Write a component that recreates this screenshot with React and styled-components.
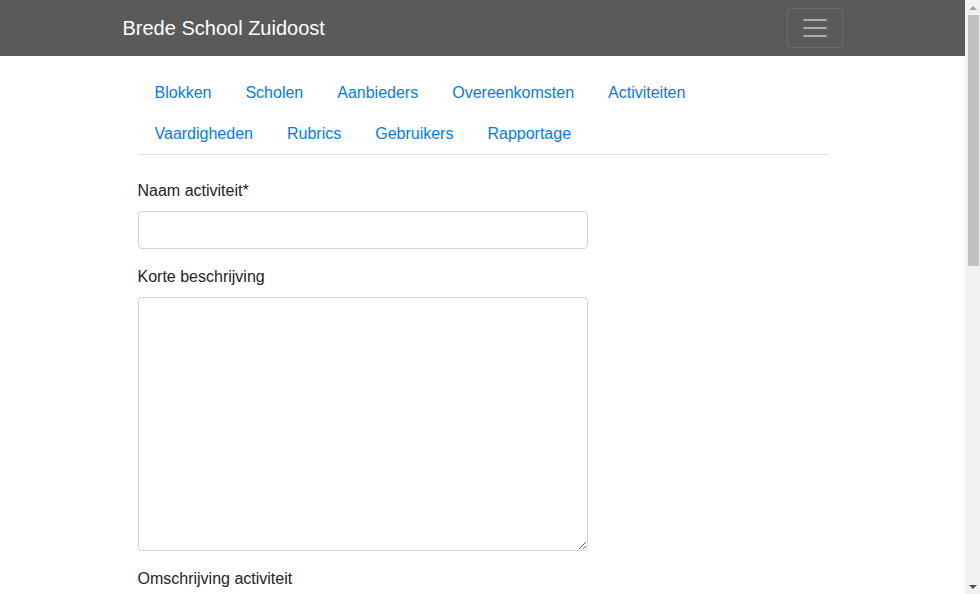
import React from 'react';
import styled, { createGlobalStyle } from 'styled-components';

const GlobalStyle = createGlobalStyle`
  *, *::before, *::after {
    box-sizing: border-box;
  }

  body {
    margin: 0;
    font-family: "Liberation Sans", Arial, sans-serif;
    font-size: 16px;
    line-height: 1.5;
    color: #212529;
    background-color: #fff;
  }
`;

const Layout = styled.div`
  display: grid;
  grid-template-columns: 1fr 15px;
  align-items: start;
`;

const Page = styled.div`
  min-width: 0;
`;

// stand-in for the browser's scrollbar seen in the screenshot
const ScrollTrack = styled.div`
  position: sticky;
  top: 0;
  height: 100vh;
  background: #f1f1f1;
  display: flex;
  flex-direction: column;
  align-items: center;
`;

const Arrow = styled.div`
  height: 15px;
  display: flex;
  align-items: center;
  justify-content: center;
  flex-shrink: 0;
`;

const Thumb = styled.div`
  width: 11px;
  height: 251px;
  background: #c1c1c1;
  margin-left: 2px;
`;

const Spacer = styled.div`
  flex: 1;
`;

const Navbar = styled.nav`
  background-color: #5a5a5a;
  padding: 8px 0;
`;

const NavbarInner = styled.div`
  width: 720px;
  margin: 0 auto;
  display: flex;
  align-items: center;
  justify-content: space-between;
`;

const Brand = styled.a`
  font-size: 20px;
  line-height: 30px;
  padding: 5px 0;
  color: #fff;
  text-decoration: none;
`;

const Toggler = styled.button`
  width: 56px;
  height: 40px;
  padding: 4px 12px;
  background: transparent;
  border: 1px solid rgba(255, 255, 255, 0.1);
  border-radius: 4px;
  display: flex;
  align-items: center;
  justify-content: center;
`;

const Container = styled.div`
  width: 720px;
  margin: 0 auto;
  padding: 16px 15px 40px;
`;

const Tabs = styled.ul`
  list-style: none;
  margin: 0 0 24px;
  padding: 0;
  display: flex;
  flex-wrap: wrap;
  border-bottom: 1px solid #dee2e6;
`;

const TabItem = styled.li`
  margin-bottom: -1px;
`;

const TabLink = styled.a`
  display: block;
  padding: 8px 16px;
  border: 1px solid transparent;
  color: #007bff;
  text-decoration: none;
`;

const Form = styled.form`
  width: 450px;
`;

const Group = styled.div`
  margin-bottom: 16px;
`;

const Label = styled.label`
  display: block;
  margin-bottom: 8px;
`;

const Input = styled.input`
  display: block;
  width: 100%;
  height: 38px;
  padding: 6px 12px;
  font: inherit;
  color: #495057;
  border: 1px solid #ced4da;
  border-radius: 4px;
`;

const TextArea = styled.textarea`
  display: block;
  width: 100%;
  padding: 6px 12px;
  font: inherit;
  line-height: 1.5;
  color: #495057;
  border: 1px solid #ced4da;
  border-radius: 4px;
`;

const tabs = [
  'Blokken', 'Scholen', 'Aanbieders', 'Overeenkomsten', 'Activiteiten',
  'Vaardigheden', 'Rubrics', 'Gebruikers', 'Rapportage',
];

function App() {
  return (
    <>
      <GlobalStyle />
      <Layout>
        <Page>
          <Navbar>
            <NavbarInner>
              <Brand href="#">Brede School Zuidoost</Brand>
              <Toggler aria-label="Menu">
                <svg width="30" height="30" viewBox="0 0 30 30">
                  <path
                    d="M4 7h22M4 15h22M4 23h22"
                    stroke="rgba(255,255,255,0.5)"
                    strokeWidth="2"
                    strokeLinecap="round"
                  />
                </svg>
              </Toggler>
            </NavbarInner>
          </Navbar>
          <Container>
            <Tabs>
              {tabs.map((t) => (
                <TabItem key={t}>
                  <TabLink href="#">{t}</TabLink>
                </TabItem>
              ))}
            </Tabs>
            <Form>
              <Group>
                <Label>Naam activiteit*</Label>
                <Input type="text" />
              </Group>
              <Group>
                <Label>Korte beschrijving</Label>
                <TextArea rows={10} />
              </Group>
              <Group>
                <Label>Omschrijving activiteit</Label>
                <TextArea rows={10} />
              </Group>
            </Form>
          </Container>
        </Page>
        <ScrollTrack>
          <Arrow>
            <svg width="8" height="4" viewBox="0 0 8 4">
              <path d="M0 4L4 0L8 4Z" fill="#a3a3a3" />
            </svg>
          </Arrow>
          <Thumb />
          <Spacer />
          <Arrow>
            <svg width="8" height="4" viewBox="0 0 8 4">
              <path d="M0 0L8 0L4 4Z" fill="#505050" />
            </svg>
          </Arrow>
        </ScrollTrack>
      </Layout>
    </>
  );
}

export default App;
